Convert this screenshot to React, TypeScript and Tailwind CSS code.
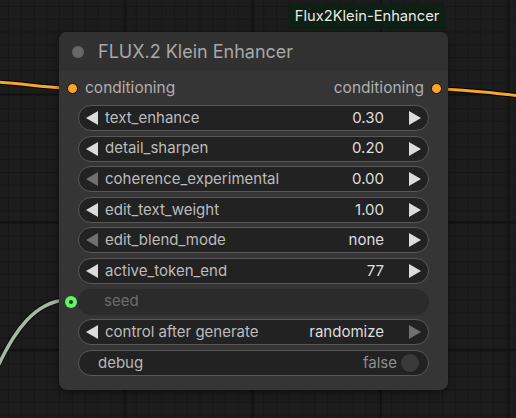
import React from "react";

type Row =
  | { kind: "num"; label: string; value: string; leftOn: boolean; rightOn: boolean }
  | { kind: "seed" }
  | { kind: "toggle"; label: string; value: string };

const rows: Row[] = [
  { kind: "num", label: "text_enhance", value: "0.30", leftOn: true, rightOn: true },
  { kind: "num", label: "detail_sharpen", value: "0.20", leftOn: true, rightOn: true },
  { kind: "num", label: "coherence_experimental", value: "0.00", leftOn: false, rightOn: true },
  { kind: "num", label: "edit_text_weight", value: "1.00", leftOn: true, rightOn: true },
  { kind: "num", label: "edit_blend_mode", value: "none", leftOn: false, rightOn: true },
  { kind: "num", label: "active_token_end", value: "77", leftOn: true, rightOn: true },
  { kind: "seed" },
  { kind: "num", label: "control after generate", value: "randomize", leftOn: true, rightOn: false },
  { kind: "toggle", label: "debug", value: "false" },
];

function Arrow({ dir, on }: { dir: "l" | "r"; on: boolean }) {
  return (
    <svg width="13" height="14" viewBox="0 0 13 14" className="shrink-0">
      <polygon
        points={dir === "l" ? "12,0 12,14 0,7" : "1,0 1,14 13,7"}
        fill={on ? "#dcdcdc" : "#707070"}
      />
    </svg>
  );
}

export default function App() {
  return (
    <div
      className="relative w-[516px] h-[418px] overflow-hidden bg-[#1c1c1c] bg-[linear-gradient(to_right,#121212_1.5px,transparent_1.5px),linear-gradient(to_bottom,#121212_1.5px,transparent_1.5px),linear-gradient(to_right,#161616_1px,transparent_1px),linear-gradient(to_bottom,#161616_1px,transparent_1px)] bg-[size:127.7px_127.7px,127.7px_127.7px,12.77px_12.77px,12.77px_12.77px] bg-[position:124.5px_93.5px,124.5px_93.5px,8px_6px,8px_6px]"
      style={{ fontFamily: "Inter, 'Noto Sans', sans-serif" }}
    >
      <svg className="absolute left-0 top-0" width="516" height="418" viewBox="0 0 516 418">
        <path d="M-5 82 C 20 83, 40 87, 66 88" stroke="#000" strokeWidth="5" fill="none" />
        <path d="M-5 82 C 20 83, 40 87, 66 88" stroke="#f7a52c" strokeWidth="3" fill="none" />
        <path d="M440 89 C 470 90, 495 93, 520 96" stroke="#000" strokeWidth="5" fill="none" />
        <path d="M440 89 C 470 90, 495 93, 520 96" stroke="#f7a52c" strokeWidth="3" fill="none" />
        <path d="M-2 366 C 15 330, 35 302, 66 300" stroke="#0c0c0c" strokeWidth="5.5" fill="none" />
        <path d="M-2 366 C 15 330, 35 302, 66 300" stroke="#a5b8a5" strokeWidth="3.5" fill="none" />
      </svg>

      <div className="absolute left-[288px] top-[3px] h-[26px] w-[158px] rounded-t-[7px] bg-[#0e1f14] flex items-center justify-center text-[14.7px] text-[#e8e8e8]">
        Flux2Klein-Enhancer
      </div>

      <div className="absolute left-[59px] top-[32px] w-[389px] h-[358px] rounded-[8px] bg-[#353535] shadow-[0_2px_6px_rgba(0,0,0,0.5)] flex flex-col">
        <div className="h-[39px] rounded-t-[8px] bg-[#313131] flex items-center pl-[13px] gap-[14px]">
          <div className="w-[12px] h-[12px] rounded-full bg-[#676767]" />
          <span className="text-[18px] text-[#a8a8a8]">FLUX.2 Klein Enhancer</span>
        </div>
        <div className="h-[34px] flex items-center justify-between pl-[8px] pr-[6px] text-[15.5px] text-[#b0b0b0]">
          <div className="flex items-center gap-[7px]">
            <div className="w-[11px] h-[11px] rounded-full bg-[#f7a52c] border border-[#111]" />
            <span>conditioning</span>
          </div>
          <div className="flex items-center gap-[7px]">
            <span>conditioning</span>
            <div className="w-[11px] h-[11px] rounded-full bg-[#f7a52c] border border-[#111]" />
          </div>
        </div>
        <div className="flex flex-col gap-[4.6px] text-[15px]">
          {rows.map((r, i) => {
            if (r.kind === "seed") {
              return (
                <div key={i} className="relative h-[26px] mx-[19px] rounded-full bg-[#2b2b2b] flex items-center pl-[26px] text-[#6b6b6b]">
                  <div className="absolute left-[-13px] top-[7px] w-[12px] h-[12px] rounded-full bg-[#62f562] flex items-center justify-center">
                    <div className="w-[4px] h-[4px] rounded-full bg-[#1e3a1e]" />
                  </div>
                  seed
                </div>
              );
            }
            if (r.kind === "toggle") {
              return (
                <div key={i} className="h-[26px] mx-[19px] rounded-full bg-[#222] border border-[#585858] flex items-center pl-[19px] pr-[9px] text-[#b8b8b8]">
                  <span className="flex-1">{r.label}</span>
                  <span className="text-[#8e8e8e] mr-[4px]">{r.value}</span>
                  <div className="w-[18px] h-[18px] rounded-full bg-[#3a3a3a]" />
                </div>
              );
            }
            return (
              <div key={i} className="h-[26px] mx-[19px] rounded-full bg-[#222] border border-[#585858] flex items-center pl-[7px] pr-[7px]">
                <Arrow dir="l" on={r.leftOn} />
                <span className="ml-[6px] flex-1 text-[#bcbcbc]">{r.label}</span>
                <span className="text-[#dedede] mr-[24px]">{r.value}</span>
                <Arrow dir="r" on={r.rightOn} />
              </div>
            );
          })}
        </div>
      </div>
    </div>
  );
}
